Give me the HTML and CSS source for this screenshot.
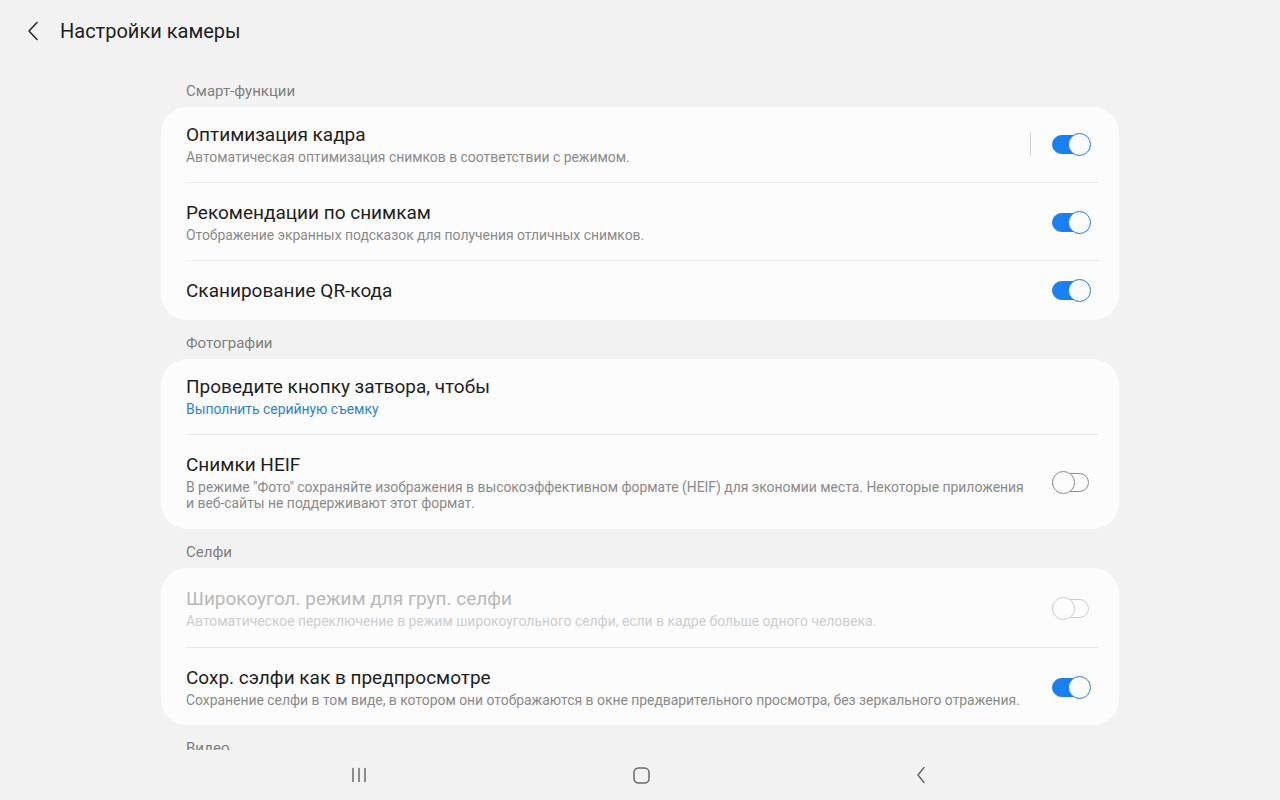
FILE: index.html
```html
<!DOCTYPE html>
<html lang="ru">
<head>
    <meta charset="UTF-8">
    <meta name="viewport" content="width=device-width, initial-scale=1.0">
    <title>Настройки камеры</title>
    <link rel="stylesheet" href="styles.css">
</head>
<body>
    <header class="app-bar">
        <button class="back-button" aria-label="Назад">
            <svg width="14" height="20" viewBox="0 0 14 20"><path d="M11 1.5 L3 10 L11 18.5" fill="none" stroke="#2a2a2a" stroke-width="1.6" stroke-linecap="round" stroke-linejoin="round"/></svg>
        </button>
        <h1>Настройки камеры</h1>
    </header>

    <main class="content">
        <div class="settings">
            <div class="section-label">Смарт-функции</div>
            <div class="card">
                <div class="row">
                    <div class="row-text">
                        <div class="row-title">Оптимизация кадра</div>
                        <div class="row-sub">Автоматическая оптимизация снимков в соответствии с режимом.</div>
                    </div>
                    <span class="v-sep"></span>
                    <span class="switch on"></span>
                </div>
                <div class="row">
                    <div class="row-text">
                        <div class="row-title">Рекомендации по снимкам</div>
                        <div class="row-sub">Отображение экранных подсказок для получения отличных снимков.</div>
                    </div>
                    <span class="switch on"></span>
                </div>
                <div class="row single">
                    <div class="row-text">
                        <div class="row-title">Сканирование QR-кода</div>
                    </div>
                    <span class="switch on"></span>
                </div>
            </div>

            <div class="section-label">Фотографии</div>
            <div class="card">
                <div class="row">
                    <div class="row-text">
                        <div class="row-title">Проведите кнопку затвора, чтобы</div>
                        <div class="row-sub link">Выполнить серийную съемку</div>
                    </div>
                </div>
                <div class="row tall">
                    <div class="row-text">
                        <div class="row-title">Снимки HEIF</div>
                        <div class="row-sub">В режиме "Фото" сохраняйте изображения в высокоэффективном формате (HEIF) для экономии места. Некоторые приложения и веб-сайты не поддерживают этот формат.</div>
                    </div>
                    <span class="switch"></span>
                </div>
            </div>

            <div class="section-label">Селфи</div>
            <div class="card selfie">
                <div class="row disabled">
                    <div class="row-text">
                        <div class="row-title">Широкоугол. режим для груп. селфи</div>
                        <div class="row-sub">Автоматическое переключение в режим широкоугольного селфи, если в кадре больше одного человека.</div>
                    </div>
                    <span class="switch"></span>
                </div>
                <div class="row">
                    <div class="row-text">
                        <div class="row-title">Сохр. сэлфи как в предпросмотре</div>
                        <div class="row-sub">Сохранение селфи в том виде, в котором они отображаются в окне предварительного просмотра, без зеркального отражения.</div>
                    </div>
                    <span class="switch on"></span>
                </div>
            </div>

            <div class="section-label">Видео</div>
        </div>
    </main>

    <nav class="nav-bar">
        <svg width="16" height="16" viewBox="0 0 16 16"><path d="M2 1.5 V14.5 M8 1.5 V14.5 M14 1.5 V14.5" stroke="#6a6a6a" stroke-width="1.5" stroke-linecap="round"/></svg>
        <svg width="17" height="17" viewBox="0 0 17 17"><rect x="1" y="1" width="15" height="15" rx="4.5" fill="none" stroke="#6a6a6a" stroke-width="1.5"/></svg>
        <svg width="12" height="18" viewBox="0 0 12 18"><path d="M9 1.5 L3 9 L9 16.5" fill="none" stroke="#6a6a6a" stroke-width="1.5" stroke-linecap="round" stroke-linejoin="round"/></svg>
    </nav>
</body>
</html>
```

FILE: styles.css
```css
body {
    font-family: Roboto, "Noto Sans", sans-serif;
    margin: 0;
    padding: 0;
    width: 1280px;
    height: 800px;
    overflow: hidden;
    display: flex;
    flex-direction: column;
    background-color: #f2f2f2;
    color: #222;
}

.app-bar {
    height: 62px;
    flex: none;
    display: flex;
    align-items: center;
    padding-left: 25px;
}

.back-button {
    width: 16px;
    height: 24px;
    padding: 0;
    margin-right: 19px;
    border: none;
    background: none;
    display: flex;
    align-items: center;
    justify-content: center;
}

.app-bar h1 {
    margin: 0;
    font-size: 20px;
    font-weight: 400;
    color: #1e1e1e;
}

.content {
    flex: 1;
    overflow: hidden;
}

.settings {
    width: 958px;
    margin: 0 auto;
    padding-top: 6px;
}

.section-label {
    padding: 13px 0 6px 25px;
    font-size: 15px;
    line-height: 20px;
    color: #7e7e7e;
}

.card {
    background-color: #fcfcfc;
    border-radius: 26px;
}

.row {
    display: flex;
    align-items: center;
    margin: 0 20px 0 25px;
    padding: 18px 8px 17px 0;
    border-top: 1px solid #e9e9e9;
}

.row:first-child {
    border-top: none;
    padding: 16px 8px 17px 0;
}

.row.single {
    height: 60px;
    padding: 0 8px 0 0;
    box-sizing: border-box;
}

.row.tall {
    padding: 18px 8px 18px 0;
}

.card.selfie .row:first-child {
    padding: 19px 8px 18px 0;
}

.row-text {
    flex: 1;
    padding-right: 20px;
}

.row-title {
    font-size: 19px;
    line-height: 24px;
    color: #1e1e1e;
}

.row-sub {
    margin-top: 2px;
    font-size: 13.9px;
    line-height: 16px;
    color: #8a8a8a;
}

.row-sub.link {
    color: #2f83c5;
}

.row.disabled .row-title {
    color: #b9b9b9;
}

.row.disabled .row-sub {
    color: #cdcdcd;
}

.v-sep {
    width: 1px;
    height: 24px;
    background-color: #cfcfcf;
    margin-right: 21px;
}

.switch {
    position: relative;
    width: 39px;
    height: 23px;
    flex: none;
}

.switch::before {
    content: "";
    position: absolute;
    left: 0;
    top: 2px;
    width: 37px;
    height: 19px;
    box-sizing: border-box;
    border-radius: 10px;
    border: 1.5px solid #8c8c8c;
    background-color: #fcfcfc;
}

.switch::after {
    content: "";
    position: absolute;
    left: 0;
    top: 0;
    width: 23px;
    height: 23px;
    box-sizing: border-box;
    border-radius: 50%;
    border: 1.5px solid #8c8c8c;
    background-color: #fcfcfc;
}

.switch.on::before {
    background-color: #1a7ff0;
    border-color: #1a7ff0;
}

.switch.on::after {
    left: auto;
    right: 0;
    border-color: #2a78d6;
}

.row.disabled .switch::before,
.row.disabled .switch::after {
    border-color: #cccccc;
}

.nav-bar {
    height: 50px;
    flex: none;
    display: flex;
    align-items: center;
    justify-content: space-between;
    padding: 0 353px 0 351px;
    background-color: #f2f2f2;
}
```
